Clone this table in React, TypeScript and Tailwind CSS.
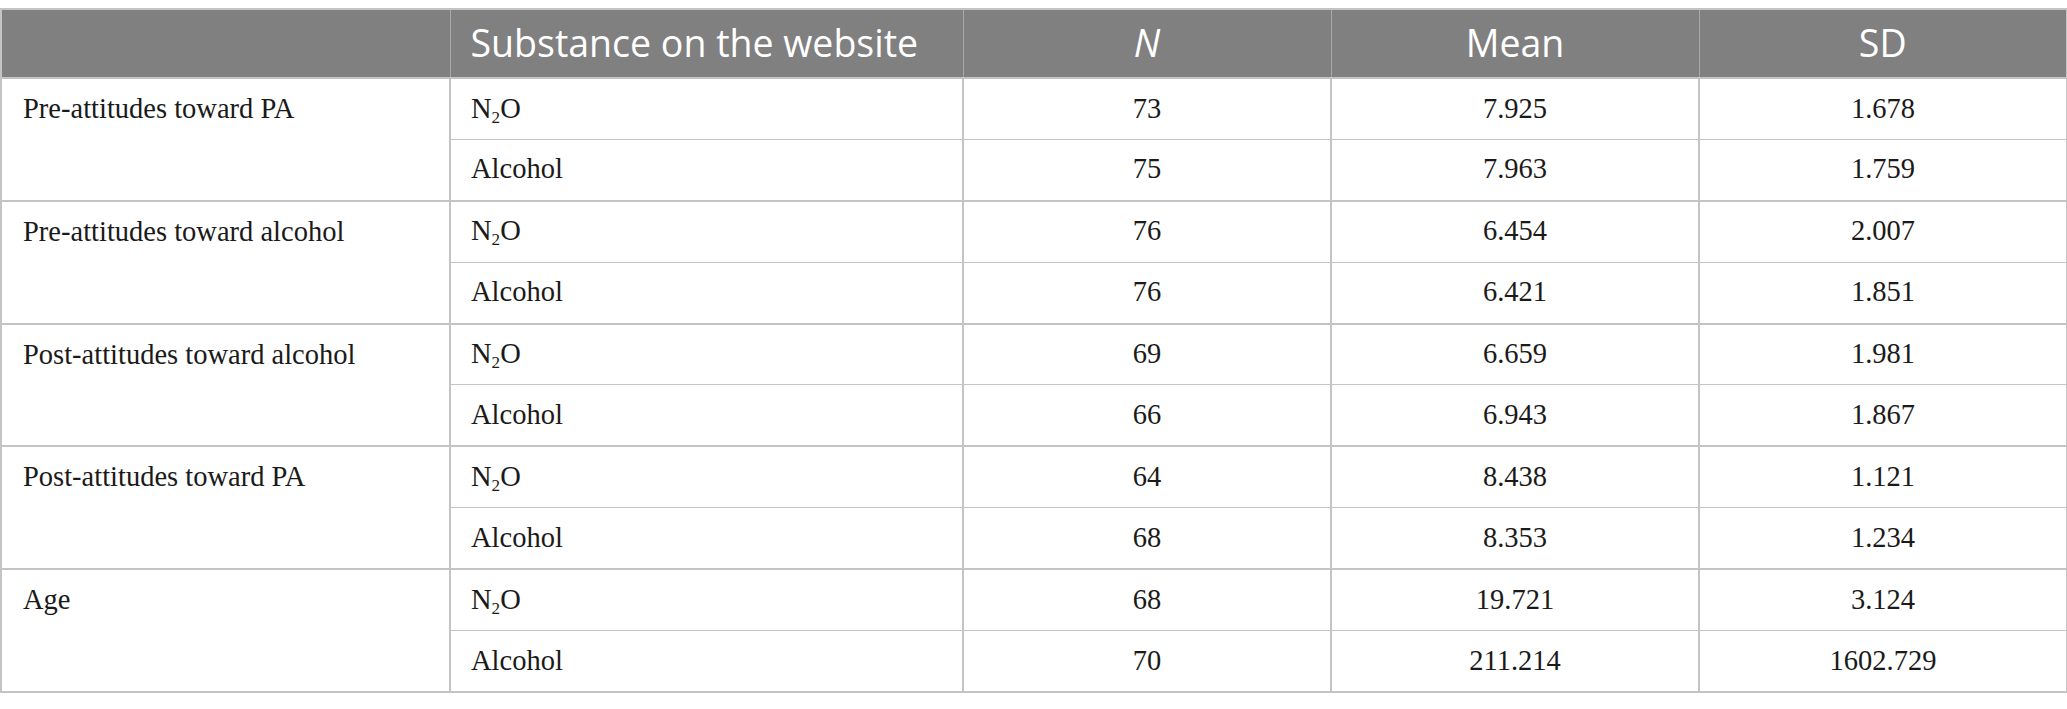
const rows = [
  {
    label: "Pre-attitudes toward PA",
    items: [
      { sub: "n2o", n: "73", mean: "7.925", sd: "1.678" },
      { sub: "Alcohol", n: "75", mean: "7.963", sd: "1.759" },
    ],
  },
  {
    label: "Pre-attitudes toward alcohol",
    items: [
      { sub: "n2o", n: "76", mean: "6.454", sd: "2.007" },
      { sub: "Alcohol", n: "76", mean: "6.421", sd: "1.851" },
    ],
  },
  {
    label: "Post-attitudes toward alcohol",
    items: [
      { sub: "n2o", n: "69", mean: "6.659", sd: "1.981" },
      { sub: "Alcohol", n: "66", mean: "6.943", sd: "1.867" },
    ],
  },
  {
    label: "Post-attitudes toward PA",
    items: [
      { sub: "n2o", n: "64", mean: "8.438", sd: "1.121" },
      { sub: "Alcohol", n: "68", mean: "8.353", sd: "1.234" },
    ],
  },
  {
    label: "Age",
    items: [
      { sub: "n2o", n: "68", mean: "19.721", sd: "3.124" },
      { sub: "Alcohol", n: "70", mean: "211.214", sd: "1602.729" },
    ],
  },
];

function Substance({ sub }: { sub: string }) {
  if (sub === "n2o") {
    return (
      <span>
        N<sub className="text-[0.6em] bottom-[-0.3em]">2</sub>O
      </span>
    );
  }
  return <span>{sub}</span>;
}

export default function App() {
  return (
    <div className="bg-white w-[2067px] h-[709px] pt-[8px]">
      <table
        className="table-fixed border-collapse w-[2066px] text-[#1a1a1a] border-2 border-[#c4c4c4]"
        style={{ fontFamily: '"Liberation Serif", serif' }}
      >
        <colgroup>
          <col className="w-[449px]" />
          <col className="w-[513px]" />
          <col className="w-[368px]" />
          <col className="w-[368px]" />
          <col className="w-[368px]" />
        </colgroup>
        <thead>
          <tr
            className="h-[69px] bg-[#808080] text-white text-[37.5px]"
            style={{ fontFamily: '"Open Sans", sans-serif' }}
          >
            <th className="border-r border-[#a9a9a9] font-normal" />
            <th className="border-r border-[#a9a9a9] font-normal text-left pl-[20px]">
              Substance on the website
            </th>
            <th className="border-r border-[#a9a9a9] font-normal italic text-center">N</th>
            <th className="border-r border-[#a9a9a9] font-normal text-center">Mean</th>
            <th className="font-normal text-center">SD</th>
          </tr>
        </thead>
        <tbody className="text-[28.5px]">
          {rows.map((group) =>
            group.items.map((item, i) => (
              <tr
                key={group.label + item.sub}
                className={`h-[61.4px] ${i === 0 ? "border-t-2 border-[#c4c4c4]" : "border-t border-[#c4c4c4]"}`}
              >
                {i === 0 && (
                  <td rowSpan={2} className="align-top border-r-2 border-[#c4c4c4] p-0 pl-[21px]">
                    <div className="h-[61px] flex items-center">{group.label}</div>
                  </td>
                )}
                <td className="border-r-2 border-[#c4c4c4] pl-[20px]">
                  <Substance sub={item.sub} />
                </td>
                <td className="border-r-2 border-[#c4c4c4] text-center">{item.n}</td>
                <td className="border-r-2 border-[#c4c4c4] text-center">{item.mean}</td>
                <td className="text-center">{item.sd}</td>
              </tr>
            ))
          )}
        </tbody>
      </table>
    </div>
  );
}
